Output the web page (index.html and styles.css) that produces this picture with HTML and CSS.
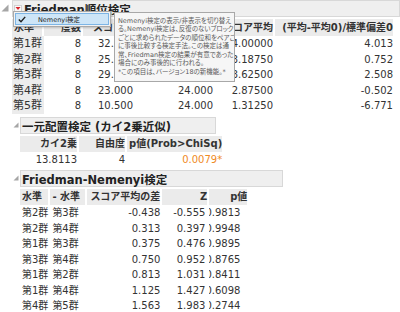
FILE: index.html
```html
<!DOCTYPE html>
<html lang="ja">
<head>
  <meta charset="UTF-8" />
  <title>Friedman順位検定</title>
  <link rel="stylesheet" href="styles.css">
</head>
<body>

<div class="outline">
  <div class="toggle toggle-main">
    <svg width="8" height="8" viewBox="0 0 8 8"><polygon points="7.5,0.5 7.5,7.5 0.5,7.5" /></svg>
  </div>
  <div class="outline-body">
    <div class="title-bar title-main">
      <span class="menu-btn">
        <svg width="8" height="7" viewBox="0 0 8 7"><rect x="0.5" y="0.5" width="7" height="6" fill="#fafafa" stroke="#d0d0d0" /><polygon points="1.5,2 6.5,2 4,5" fill="#d8262c" /></svg>
      </span>
      <span class="title">Friedman順位検定</span>
    </div>

    <table class="grid grid-friedman">
      <colgroup>
        <col class="fc1"><col class="fc2"><col class="fc3"><col class="fc4"><col class="fc5"><col class="fc6">
      </colgroup>
      <thead>
        <tr>
          <th class="left">水準</th>
          <th>度数</th>
          <th>スコア和</th>
          <th>期待値スコア</th>
          <th>スコア平均</th>
          <th>(平均-平均0)/標準偏差0</th>
        </tr>
      </thead>
      <tbody>
        <tr><td class="label">第1群</td><td>8</td><td>32.000</td><td>24.000</td><td>4.00000</td><td>4.013</td></tr>
        <tr><td class="label">第2群</td><td>8</td><td>25.500</td><td>24.000</td><td>3.18750</td><td>0.752</td></tr>
        <tr><td class="label">第3群</td><td>8</td><td>29.000</td><td>24.000</td><td>3.62500</td><td>2.508</td></tr>
        <tr><td class="label">第4群</td><td>8</td><td>23.000</td><td>24.000</td><td>2.87500</td><td>-0.502</td></tr>
        <tr><td class="label">第5群</td><td>8</td><td>10.500</td><td>24.000</td><td>1.31250</td><td>-6.771</td></tr>
      </tbody>
    </table>

    <div class="outline sub sub-chi">
      <div class="toggle">
        <svg width="6" height="6" viewBox="0 0 6 6"><polygon points="5.5,0.5 5.5,5.5 0.5,5.5" /></svg>
      </div>
      <div class="outline-body">
        <div class="title-bar title-chi"><span class="title">一元配置検定 (カイ2乗近似)</span></div>
        <table class="grid grid-chi">
          <colgroup><col class="cc1"><col class="cc2"><col class="cc3"></colgroup>
          <thead>
            <tr><th>カイ2乗</th><th>自由度</th><th>p値(Prob&gt;ChiSq)</th></tr>
          </thead>
          <tbody>
            <tr><td>13.8113</td><td>4</td><td class="signif">0.0079*</td></tr>
          </tbody>
        </table>
      </div>
    </div>

    <div class="outline sub sub-nemenyi">
      <div class="toggle">
        <svg width="6" height="6" viewBox="0 0 6 6"><polygon points="5.5,0.5 5.5,5.5 0.5,5.5" /></svg>
      </div>
      <div class="outline-body">
        <div class="title-bar title-nemenyi"><span class="title">Friedman-Nemenyi検定</span></div>
        <table class="grid grid-nemenyi">
          <colgroup><col class="nc1"><col class="nc2"><col class="nc3"><col class="nc4"><col class="nc5"></colgroup>
          <thead>
            <tr><th class="left">水準</th><th class="left">- 水準</th><th>スコア平均の差</th><th class="z">Z</th><th>p値</th></tr>
          </thead>
          <tbody>
            <tr><td class="left">第2群</td><td class="left">第3群</td><td>-0.438</td><td class="z">-0.555</td><td class="p">0.9813</td></tr>
            <tr><td class="left">第2群</td><td class="left">第4群</td><td>0.313</td><td class="z">0.397</td><td class="p">0.9948</td></tr>
            <tr><td class="left">第1群</td><td class="left">第3群</td><td>0.375</td><td class="z">0.476</td><td class="p">0.9895</td></tr>
            <tr><td class="left">第3群</td><td class="left">第4群</td><td>0.750</td><td class="z">0.952</td><td class="p">0.8765</td></tr>
            <tr><td class="left">第1群</td><td class="left">第2群</td><td>0.813</td><td class="z">1.031</td><td class="p">0.8411</td></tr>
            <tr><td class="left">第1群</td><td class="left">第4群</td><td>1.125</td><td class="z">1.427</td><td class="p">0.6098</td></tr>
            <tr><td class="left">第4群</td><td class="left">第5群</td><td>1.563</td><td class="z">1.983</td><td class="p">0.2744</td></tr>
          </tbody>
        </table>
      </div>
    </div>
  </div>
</div>

<!-- red triangle menu, opened -->
<div class="menu">
  <div class="menu-item">
    <svg class="check" width="8" height="7" viewBox="0 0 8 7"><path d="M0.8 3.6 L3 5.8 L7.2 0.9" fill="none" stroke="#1e1e1e" stroke-width="1.4" /></svg>
    <span>Nemenyi検定</span>
  </div>
</div>

<div class="tip">
  <div>Nemenyi検定の表示/非表示を切り替え</div>
  <div>る。Nemenyi検定は、反復のないブロック</div>
  <div>ごとに求められたデータの順位和をペアごと</div>
  <div>に事後比較する検定手法。この検定は通</div>
  <div>常、Friedman検定の結果が有意であった</div>
  <div>場合にのみ事後的に行われる。</div>
  <div>*この項目は、バージョン18の新機能。*</div>
</div>

</body>
</html>
```

FILE: styles.css
```css
body {
  margin: 0;
  background: #fff;
  color: #333;
  font-family: "DejaVu Sans", "Noto Sans CJK JP", sans-serif;
  font-size: 10px;
  overflow: hidden;
}
.outline {
  display: flex;
  align-items: flex-start;
}
.outline-body {
  flex: 1;
  min-width: 0;
}
.toggle {
  width: 8px;
  flex: none;
}
.toggle svg {
  display: block;
  margin: 5px 0 0 1px;
  fill: #a6a6a6;
}
.toggle-main {
  width: 12px;
}
.toggle-main svg {
  margin: 4px 0 0 1px;
}
.title-bar {
  height: 17px;
  box-sizing: border-box;
  background: #efefef;
  border: 1px solid #d8d8d8;
  display: flex;
  align-items: center;
  padding-left: 1px;
  white-space: nowrap;
}
.title {
  font-size: 11.5px;
  font-weight: bold;
  color: #222;
}
.title-main {
  padding-left: 1px;
}
.menu-btn {
  display: flex;
  width: 10px;
}
.title-chi {
  width: 196px;
}
.title-nemenyi {
  width: 263px;
}
.sub {
  margin-top: 3.5px;
}
.sub-nemenyi {
  margin-top: 2.5px;
}

/* report tables */
.grid {
  border-collapse: separate;
  border-spacing: 0;
  table-layout: fixed;
  margin-top: 2px;
}
.grid th, .grid td {
  padding: 0 2px;
  text-align: right;
  white-space: nowrap;
  overflow: hidden;
}
.grid th {
  height: 16px;
  line-height: 16px;
  font-weight: bold;
  color: #333;
  background: #ebebeb;
  box-shadow: inset -2px 0 0 #fff;
}
.grid td {
  height: 15.5px;
  line-height: 15.5px;
}
.grid .left {
  text-align: left;
}
.grid-friedman th {
  height: 17px;
  line-height: 17px;
}
.grid-friedman .label {
  background: #ececec;
  font-size: 11px;
  padding-left: 1px;
}
.fc1 { width: 32px; }
.fc2 { width: 39px; }
.fc3 { width: 52px; }
.fc4 { width: 80px; }
.fc5 { width: 60px; }
.fc6 { width: 120px; }

.cc1 { width: 59px; }
.cc2 { width: 48px; }
.cc3 { width: 89px; }
.signif {
  color: #f08a24;
}

.nc1 { width: 29px; }
.nc2 { width: 37px; }
.nc3 { width: 75px; }
.nc4 { width: 47px; }
.nc5 { width: 40px; }
.grid-nemenyi td.z {
  padding-right: 4px;
}
.grid-nemenyi td.p {
  text-align: left;
  padding: 0;
  text-indent: -4px;
}

/* popup menu of the red triangle */
.menu {
  position: absolute;
  left: 13px;
  top: 11px;
  width: 98px;
  height: 16px;
  box-sizing: border-box;
  padding: 1px;
  background: #f2f2f2;
  border: 1px solid #a9a9a9;
  box-shadow: 1px 1px 2px rgba(0,0,0,0.2);
}
.menu-item {
  height: 12px;
  box-sizing: border-box;
  background: #cde5f7;
  border: 1px solid #7db5e5;
  display: flex;
  align-items: center;
  font-size: 6.5px;
  color: #222;
}
.menu-item .check {
  margin: 0 12px 0 2px;
}

/* tooltip */
.tip {
  position: absolute;
  left: 114px;
  top: 12px;
  width: 121px;
  height: 70px;
  box-sizing: border-box;
  padding: 3.5px 0 0 3px;
  background: #f6f6f6;
  border: 1px solid #a8a8a8;
  color: #5a5a5a;
  font-size: 6.5px;
  font-feature-settings: "palt";
  line-height: 8.5px;
  white-space: nowrap;
  overflow: hidden;
}
```
